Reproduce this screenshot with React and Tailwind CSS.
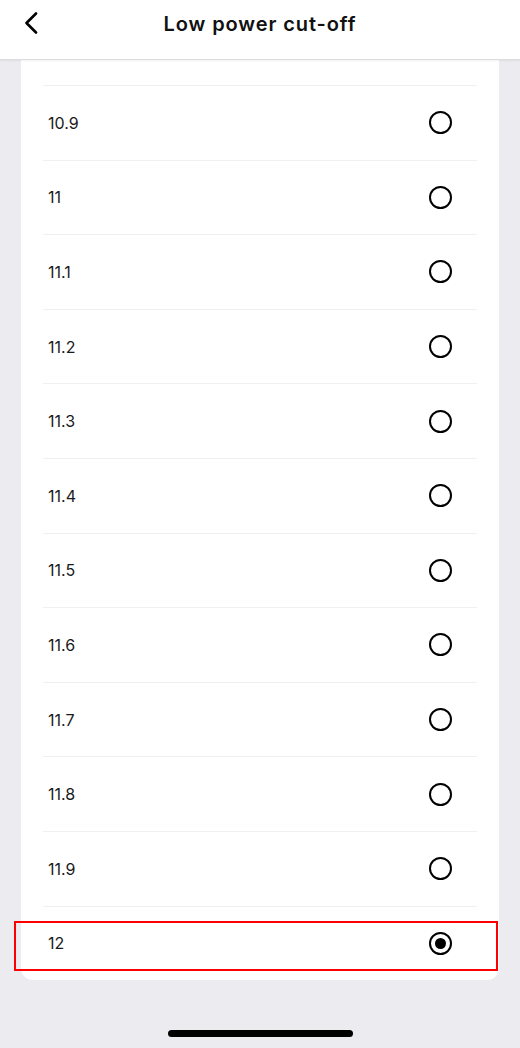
const options = ["10.9", "11", "11.1", "11.2", "11.3", "11.4", "11.5", "11.6", "11.7", "11.8", "11.9", "12"];

const Radio = ({ checked }) => (
  <div className="w-[23px] h-[23px] rounded-full border-[2.5px] border-black flex items-center justify-center">
    {checked && <div className="w-[11px] h-[11px] rounded-full bg-black" />}
  </div>
);

const App = () => {
  const selected = "12";

  return (
    <div
      className="w-[520px] h-[1048px] bg-[#ebebf0] flex flex-col overflow-hidden"
      style={{ fontFamily: "Inter, 'Noto Sans', sans-serif" }}
    >
      <header className="h-[60px] shrink-0 bg-white border-b border-[#dcdcdc] shadow-[0_1px_2px_rgba(0,0,0,0.06)] flex items-center pb-[14px] relative z-10">
        <button className="ml-[22px] w-[18px] h-[24px] flex items-center justify-center">
          <svg width="14" height="22" viewBox="0 0 14 22" fill="none">
            <path d="M12 1.5 L2.5 11 L12 20.5" stroke="#000" strokeWidth="2.6" strokeLinecap="round" strokeLinejoin="round" />
          </svg>
        </button>
        <h1 className="absolute left-0 right-0 top-[10px] text-center text-[20px] leading-[28px] font-semibold text-[#111] tracking-[0.9px] pointer-events-none">
          Low power cut-off
        </h1>
      </header>

      <div className="mx-[21px] bg-white rounded-b-[12px]">
        <div className="h-[25px]" />
        {options.map((v) => (
          <div
            key={v}
            className="relative mx-[22px] h-[74.6px] border-t border-[#f0f0f2] flex items-center justify-between pl-[5px] pr-[25px]"
          >
            <span className="text-[16px] text-[#1a1a1a]">{v}</span>
            <Radio checked={v === selected} />
            {v === selected && (
              <div className="absolute left-[-29px] right-[-21px] top-[14px] bottom-[9px] border-2 border-[#ff0000] pointer-events-none" />
            )}
          </div>
        ))}
      </div>

      <div className="flex-1 flex items-end justify-center pb-[11px]">
        <div className="w-[185px] h-[7px] rounded-full bg-black" />
      </div>
    </div>
  );
};

export default App;
